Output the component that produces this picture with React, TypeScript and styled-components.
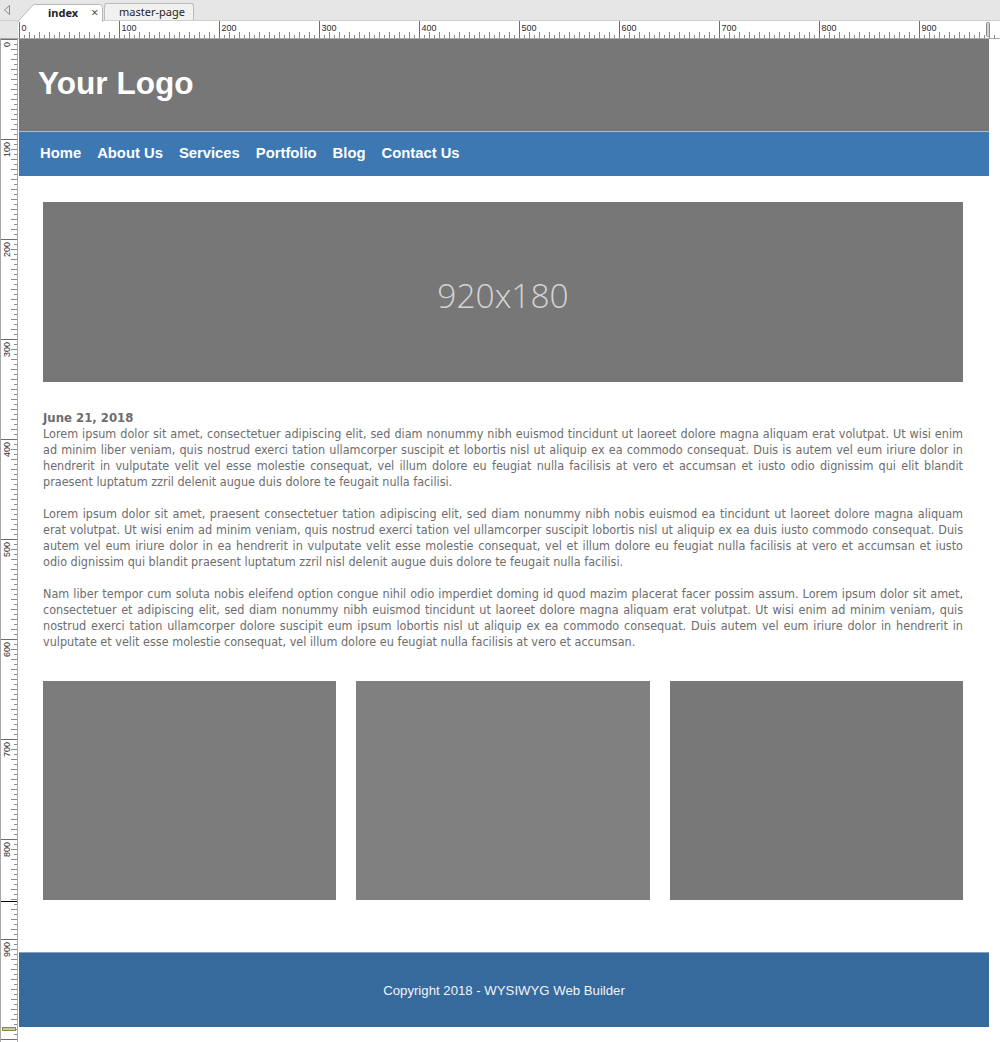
import React from 'react';
import styled, { createGlobalStyle } from 'styled-components';

const GlobalStyle = createGlobalStyle`
  html, body {
    margin: 0;
    padding: 0;
    background: #fff;
  }
  body {
    font-family: 'Liberation Sans', Arial, sans-serif;
  }
`;

const paragraphs: string[][] = [
  [
    'Lorem ipsum dolor sit amet, consectetuer adipiscing elit, sed diam nonummy nibh euismod tincidunt ut laoreet dolore magna aliquam erat volutpat. Ut wisi enim',
    'ad minim liber veniam, quis nostrud exerci tation ullamcorper suscipit et lobortis nisl ut aliquip ex ea commodo consequat. Duis is autem vel eum iriure dolor in',
    'hendrerit in vulputate velit vel esse molestie consequat, vel illum dolore eu feugiat nulla facilisis at vero et accumsan et iusto odio dignissim qui elit blandit',
    'praesent luptatum zzril delenit augue duis dolore te feugait nulla facilisi.',
  ],
  [
    'Lorem ipsum dolor sit amet, praesent consectetuer tation adipiscing elit, sed diam nonummy nibh nobis euismod ea tincidunt ut laoreet dolore magna aliquam',
    'erat volutpat. Ut wisi enim ad minim veniam, quis nostrud exerci tation vel ullamcorper suscipit lobortis nisl ut aliquip ex ea duis iusto commodo consequat. Duis',
    'autem vel eum iriure dolor in ea hendrerit in vulputate velit esse molestie consequat, vel et illum dolore eu feugiat nulla facilisis at vero et accumsan et iusto',
    'odio dignissim qui blandit praesent luptatum zzril nisl delenit augue duis dolore te feugait nulla facilisi.',
  ],
  [
    'Nam liber tempor cum soluta nobis eleifend option congue nihil odio imperdiet doming id quod mazim placerat facer possim assum. Lorem ipsum dolor sit amet,',
    'consectetuer et adipiscing elit, sed diam nonummy nibh euismod tincidunt ut laoreet dolore magna aliquam erat volutpat. Ut wisi enim ad minim veniam, quis',
    'nostrud exerci tation ullamcorper dolore suscipit eum ipsum lobortis nisl ut aliquip ex ea commodo consequat. Duis autem vel eum iriure dolor in hendrerit in',
    'vulputate et velit esse molestie consequat, vel illum dolore eu feugiat nulla facilisis at vero et accumsan.',
  ],
];

const navItems = ['Home', 'About Us', 'Services', 'Portfolio', 'Blog', 'Contact Us'];
const galleryShades = ['#7b7b7b', '#808080', '#787878'];

/* ---------- editor chrome ---------- */

const Frame = styled.div`
  width: 1000px;
  height: 1042px;
  overflow: hidden;
  display: flex;
  flex-direction: column;
  background: #fff;
`;

const TabBar = styled.div`
  height: 21px;
  box-sizing: border-box;
  flex-shrink: 0;
  display: flex;
  align-items: flex-end;
  padding-left: 3px;
  background: #e6e6e6;
  border-bottom: 1px solid #cfcfcf;
  font-family: 'Noto Sans', 'DejaVu Sans', sans-serif;
  font-size: 11px;
  color: #1e1e1e;
`;

const ScrollArrow = styled.svg`
  align-self: center;
  margin-right: 6px;
`;

const ActiveTab = styled.div`
  position: relative;
  width: 86px;
  height: 17px;
  margin-bottom: -1px;
  display: flex;
  align-items: center;
  padding-left: 31px;
  box-sizing: border-box;
  font-weight: 700;

  svg {
    position: absolute;
    left: 0;
    top: 0;
  }
`;

const TabLabel = styled.span`
  position: relative;
  line-height: 17px;
`;

const CloseGlyph = styled.span`
  position: relative;
  margin-left: 13px;
  font-weight: 400;
  font-size: 13px;
  color: #555;
  line-height: 17px;
`;

const Tab = styled.div`
  height: 17px;
  width: 90px;
  box-sizing: border-box;
  margin-left: 1px;
  padding-left: 14px;
  background: #f1f1f1;
  border: 1px solid #bdbdbd;
  border-bottom: none;
  border-radius: 3px 3px 0 0;
  line-height: 16px;
`;

const RulerRow = styled.div`
  display: flex;
  height: 18px;
  flex-shrink: 0;
`;

const RulerCorner = styled.div`
  width: 18px;
  background: #e6e6e6;
  box-sizing: border-box;
  border-bottom: 1px solid #a8a8a8;
`;

const TopRulerBox = styled.div`
  flex: 1;
  background: #fff;
  box-sizing: border-box;
  border-bottom: 1px solid #a8a8a8;
`;

const Workspace = styled.div`
  flex: 1;
  display: flex;
  min-height: 0;
`;

const LeftRulerBox = styled.div`
  width: 18px;
  box-sizing: border-box;
  flex-shrink: 0;
  background: #fff;
  border-left: 1px solid #a8a8a8;
  border-right: 1px solid #a8a8a8;
`;

const Canvas = styled.div`
  flex: 1;
  padding-left: 1px;
  background: #fff;
`;

/* ---------- page ---------- */

const Page = styled.div`
  width: 970px;
  display: flex;
  flex-direction: column;
`;

const Header = styled.header`
  height: 92px;
  box-sizing: border-box;
  padding: 28px 0 0 19px;
  background: #777777;
`;

const Logo = styled.div`
  font-family: 'Liberation Sans', Arial, sans-serif;
  font-weight: 700;
  font-size: 31.6px;
  line-height: 32px;
  color: #fff;
`;

const Nav = styled.nav`
  height: 45px;
  box-sizing: border-box;
  display: flex;
  align-items: center;
  padding: 0 0 2px 13px;
  background: #3d78b3;
  border-top: 1px solid #a9bcd0;
`;

const NavLink = styled.a`
  padding: 0 8px;
  font-family: 'Liberation Sans', Arial, sans-serif;
  font-weight: 700;
  font-size: 14.8px;
  color: #fff;
  text-decoration: none;
`;

const Content = styled.main`
  padding: 26px 26px 52px 24px;
`;

const Banner = styled.div`
  height: 180px;
  display: flex;
  align-items: center;
  justify-content: center;
  padding-top: 6px;
  box-sizing: border-box;
  background: #777777;
  font-family: 'Open Sans', 'Noto Sans', sans-serif;
  font-weight: 300;
  font-size: 33.5px;
  color: #d4d4d4;
`;

const Article = styled.article`
  margin-top: 28px;
  font-family: 'DejaVu Sans Condensed', 'DejaVu Sans', sans-serif;
  color: #6d6d6d;
  line-height: 16px;
`;

const DateLine = styled.div`
  font-weight: 700;
  font-size: 13px;
`;

const Paragraph = styled.p`
  margin: 0 0 16px;
  font-size: 12.5px;

  &:last-child {
    margin-bottom: 0;
  }
`;

const Line = styled.span<{ $last?: boolean }>`
  display: block;
  text-align: justify;
  text-align-last: ${({ $last }) => ($last ? 'left' : 'justify')};
`;

const Gallery = styled.div`
  margin-top: 31px;
  display: grid;
  grid-template-columns: repeat(3, 1fr);
  gap: 20px;
`;

const Thumb = styled.div<{ $shade: string }>`
  height: 219px;
  background: ${({ $shade }) => $shade};
`;

const Footer = styled.footer`
  height: 75px;
  box-sizing: border-box;
  display: flex;
  align-items: center;
  justify-content: center;
  background: #36699c;
  border-top: 1px solid #87a3c3;
  font-family: 'Liberation Sans', Arial, sans-serif;
  font-size: 13.2px;
  color: #f2f4f8;
`;

/* ---------- rulers ---------- */

const TopRuler: React.FC = () => {
  const ticks = [];
  for (let v = 0; v <= 975; v += 5) {
    const x = v + 1.5;
    if (v % 100 === 0) {
      ticks.push(<line key={v} x1={x} y1={0} x2={x} y2={17} stroke="#6f6f6f" />);
      ticks.push(
        <text key={`t${v}`} x={x + 2} y={10} fontSize={9} fill="#2a2a2a" fontFamily="'Liberation Sans', Arial, sans-serif">
          {v}
        </text>,
      );
    } else {
      const h = v % 10 === 0 ? 6 : 3;
      ticks.push(<line key={v} x1={x} y1={17 - h} x2={x} y2={17} stroke="#8a8a8a" />);
    }
  }
  return (
    <svg width={982} height={17}>
      {ticks}
      <rect x={968.5} y={1.5} width={3} height={14} rx={1} fill="#d2d2d2" stroke="#8a8a8a" />
    </svg>
  );
};

const LeftRuler: React.FC = () => {
  const ticks = [];
  for (let v = 0; v <= 1000; v += 5) {
    const y = v + 0.5;
    if (v % 100 === 0) {
      ticks.push(<line key={v} x1={0} y1={y} x2={16} y2={y} stroke="#6f6f6f" />);
      if (v < 1000) {
        ticks.push(
          <text
            key={`t${v}`}
            transform={`translate(9, ${v + 3}) rotate(-90)`}
            textAnchor="end"
            fontSize={9}
            fill="#2a2a2a"
            fontFamily="'Liberation Sans', Arial, sans-serif"
          >
            {v}
          </text>,
        );
      }
    } else {
      const w = v % 10 === 0 ? 6 : 3;
      ticks.push(<line key={v} x1={16 - w} y1={y} x2={16} y2={y} stroke="#8a8a8a" />);
    }
  }
  return (
    <svg width={16} height={1003}>
      {ticks}
      <line x1={0} y1={862.5} x2={16} y2={862.5} stroke="#000" />
      <rect x={1.5} y={988.5} width={13} height={3} fill="#c4c4c4" stroke="#8c8c3c" />
    </svg>
  );
};

const App: React.FC = () => {
  return (
    <>
      <GlobalStyle />
      <Frame>
        <TabBar>
          <ScrollArrow width={8} height={12} viewBox="0 0 8 12">
            <path d="M6.5 1.5 L1.5 6 L6.5 10.5 Z" fill="none" stroke="#8c8c8c" />
          </ScrollArrow>
          <ActiveTab>
            <svg width={86} height={18}>
              <path d="M0.5 18 L16.5 0.5 H82.5 Q85.5 0.5 85.5 3.5 V18" fill="#fff" stroke="#b8b8b8" />
            </svg>
            <TabLabel>index</TabLabel>
            <CloseGlyph>×</CloseGlyph>
          </ActiveTab>
          <Tab>master-page</Tab>
        </TabBar>
        <RulerRow>
          <RulerCorner />
          <TopRulerBox>
            <TopRuler />
          </TopRulerBox>
        </RulerRow>
        <Workspace>
          <LeftRulerBox>
            <LeftRuler />
          </LeftRulerBox>
          <Canvas>
            <Page>
              <Header>
                <Logo>Your Logo</Logo>
              </Header>
              <Nav>
                {navItems.map(item => (
                  <NavLink key={item} href="#">
                    {item}
                  </NavLink>
                ))}
              </Nav>
              <Content>
                <Banner>920x180</Banner>
                <Article>
                  <DateLine>June 21, 2018</DateLine>
                  {paragraphs.map((lines, i) => (
                    <Paragraph key={i}>
                      {lines.map((line, j) => (
                        <Line key={j} $last={j === lines.length - 1}>
                          {line}
                        </Line>
                      ))}
                    </Paragraph>
                  ))}
                </Article>
                <Gallery>
                  {galleryShades.map((shade, i) => (
                    <Thumb key={i} $shade={shade} />
                  ))}
                </Gallery>
              </Content>
              <Footer>Copyright 2018 - WYSIWYG Web Builder</Footer>
            </Page>
          </Canvas>
        </Workspace>
      </Frame>
    </>
  );
};

export default App;
